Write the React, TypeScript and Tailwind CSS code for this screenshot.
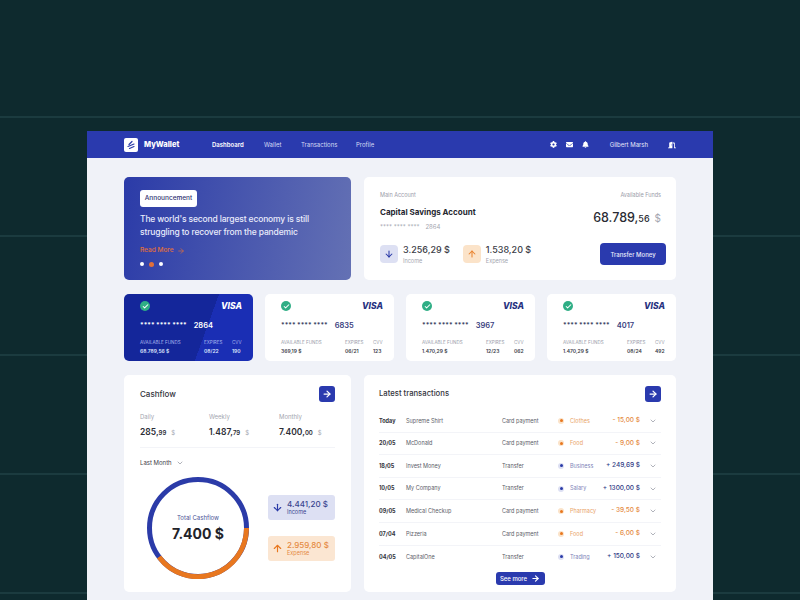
import React from 'react';
import { ArrowDown, ArrowRight, ArrowUp, Check, ChevronDown } from 'lucide-react';
import { FaBell, FaCog, FaDoorOpen, FaEnvelope } from 'react-icons/fa';

const cards = [
  { last: '2864', funds: '68.789,56 $', expires: '08/22', cvv: '190', active: true },
  { last: '6835', funds: '369,19 $', expires: '06/21', cvv: '123', active: false },
  { last: '3967', funds: '1.470,29 $', expires: '12/23', cvv: '062', active: false },
  { last: '4017', funds: '1.470,29 $', expires: '08/24', cvv: '492', active: false },
];

const transactions = [
  { date: 'Today', name: 'Supreme Shirt', type: 'Card payment', tag: 'Clothes', amount: '- 15,00 $', out: true },
  { date: '20/05', name: 'McDonald', type: 'Card payment', tag: 'Food', amount: '- 9,00 $', out: true },
  { date: '18/05', name: 'Invest Money', type: 'Transfer', tag: 'Business', amount: '+ 249,69 $', out: false },
  { date: '10/05', name: 'My Company', type: 'Transfer', tag: 'Salary', amount: '+ 1300,00 $', out: false },
  { date: '09/05', name: 'Medical Checkup', type: 'Card payment', tag: 'Pharmacy', amount: '- 39,50 $', out: true },
  { date: '07/04', name: 'Pizzeria', type: 'Card payment', tag: 'Food', amount: '- 6,00 $', out: true },
  { date: '04/05', name: 'CapitalOne', type: 'Transfer', tag: 'Trading', amount: '+ 150,00 $', out: false },
];

const Logo = () => (
  <div className="flex h-[14px] w-[14px] items-center justify-center rounded-[2px] bg-white">
    <svg width="10" height="10" viewBox="0 0 10 10" fill="none" stroke="#2b3ba8" strokeWidth="1.2" strokeLinecap="round">
      <path d="M3 4.5 6 1.5" />
      <path d="M2 6.5 8 4" />
      <path d="M3.5 8.5 8 6.5" />
    </svg>
  </div>
);

const Visa = ({ light }: { light: boolean }) => (
  <span className={`text-[8.5px] leading-none font-extrabold italic ${light ? 'text-white' : 'text-[#27327f]'}`}>VISA</span>
);

const PaymentCard = ({ card }: { card: (typeof cards)[number] }) => {
  const label = card.active ? 'text-[#a9b5ee]' : 'text-[#9a9daa]';
  const value = card.active ? 'text-[#dfe4fb]' : 'text-[#3b3d4a]';
  return (
    <div
      className={`flex h-[67px] flex-1 flex-col rounded-[5px] pt-[7px] pr-[11px] pl-[16px] ${
        card.active ? 'bg-[linear-gradient(110deg,#14269a_0%,#14269a_62%,#1a2eb4_62%,#1a2eb4_100%)]' : 'bg-white'
      }`}
    >
      <div className="flex items-center justify-between">
        <span className="flex h-[10px] w-[10px] items-center justify-center rounded-full bg-[#2fae85]">
          <Check size={7} strokeWidth={3.5} className="text-white" />
        </span>
        <Visa light={card.active} />
      </div>
      <div className="mt-[8px] flex items-center gap-[7px]">
        <span className={`text-[6.5px] leading-[10px] font-bold ${card.active ? 'text-white' : 'text-[#3b3f63]'}`}>
          **** **** ****
        </span>
        <span className={`mt-[2px] text-[7.5px] leading-[10px] font-semibold ${card.active ? 'text-white' : 'text-[#3a4180]'}`}>{card.last}</span>
      </div>
      <div className="mt-[7px] flex justify-between text-[4.5px] leading-[9px]">
        <div className="flex-1">
          <div className={label}>AVAILABLE FUNDS</div>
          <div className={`text-[5px] font-semibold ${value}`}>{card.funds}</div>
        </div>
        <div className="w-[28px]">
          <div className={label}>EXPIRES</div>
          <div className={`text-[5px] font-semibold ${value}`}>{card.expires}</div>
        </div>
        <div className="w-[10px]">
          <div className={label}>CVV</div>
          <div className={`text-[5px] font-semibold ${value}`}>{card.cvv}</div>
        </div>
      </div>
    </div>
  );
};

const SquareArrow = () => (
  <button className="flex h-[16px] w-[16px] items-center justify-center rounded-[3px] bg-[#2a3aae]">
    <ArrowRight size={10} strokeWidth={3} className="text-white" />
  </button>
);

const Stat = ({ label, whole, cents, width }: { label: string; whole: string; cents: string; width: string }) => (
  <div className={width}>
    <div className="text-[6px] leading-[8px] text-[#a4a6b0]">{label}</div>
    <div className="mt-[5px] flex items-baseline text-[8.5px] leading-[12px] font-semibold text-[#2c2d35]">
      {whole}
      <span className="text-[6px]">{cents}</span>
      <span className="ml-[5px] text-[6px] font-normal text-[#a4a6b0]">$</span>
    </div>
  </div>
);

const Summary = ({ out }: { out: boolean }) => (
  <div className="flex items-center gap-[5px]">
    <span
      className={`flex h-[18px] w-[18px] items-center justify-center rounded-[4px] ${out ? 'bg-[#fbe3c9]' : 'bg-[#dde0f3]'}`}
    >
      {out ? (
        <ArrowUp size={10} strokeWidth={2.5} className="text-[#e9822e]" />
      ) : (
        <ArrowDown size={10} strokeWidth={2.5} className="text-[#2b3ba8]" />
      )}
    </span>
    <div>
      <div className="text-[9px] leading-[12px] font-medium text-[#3b3c46]">{out ? '1.538,20 $' : '3.256,29 $'}</div>
      <div className="mt-[2px] text-[5.5px] leading-[7px] text-[#a4a6b0]">{out ? 'Expense' : 'Income'}</div>
    </div>
  </div>
);

const App: React.FC = () => {
  return (
    <div className="h-[600px] w-[800px] overflow-hidden bg-[#0e2a2e] bg-[linear-gradient(#1b3b3f_2px,transparent_2px)] bg-[length:100%_119px] bg-[position:0_116px] pt-[131px] pl-[87px] font-['Inter',sans-serif]">
      <div className="h-[469px] w-[626px] bg-[#f0f2f8]">
        <header className="flex h-[27px] items-center bg-[#2a3aae] pr-[37px] pl-[37px] text-[6px] text-[#d5daf5]">
          <Logo />
          <span className="ml-[6px] w-[68px] text-[7.5px] font-extrabold text-white">MyWallet</span>
          <span className="w-[52px] font-semibold text-white">Dashboard</span>
          <span className="w-[37px]">Wallet</span>
          <span className="w-[55px]">Transactions</span>
          <span>Profile</span>
          <div className="ml-auto flex items-center gap-[9px] text-white">
            <FaCog size={7} />
            <FaEnvelope size={7} />
            <FaBell size={7} />
          </div>
          <span className="ml-[21px] text-[#e5e8fa]">Gilbert Marsh</span>
          <FaDoorOpen size={8} className="ml-[20px] text-white" />
        </header>

        <main className="flex flex-col gap-[14px] pt-[19px] pr-[37px] pl-[37px]">
          <div className="flex gap-[13px]">
            <section className="flex h-[103px] w-[227px] flex-col items-start rounded-[5px] bg-[linear-gradient(100deg,#2b3ba8_0%,#6471b4_100%)] pt-[13px] pl-[16px]">
              <span className="flex h-[17px] w-[57px] items-center justify-center rounded-[3px] bg-white text-[6.5px] font-medium text-[#2f3170]">
                Announcement
              </span>
              <p className="mt-[6px] text-[8.5px] leading-[13px] font-medium tracking-[-0.15px] text-[#e9ebfb]">
                The world's second largest economy is still
                <br />
                struggling to recover from the pandemic
              </p>
              <div className="mt-[7px] flex items-center gap-[3px] text-[6.5px] font-medium text-[#e2703a]">
                Read More
                <ArrowRight size={8} strokeWidth={2} />
              </div>
              <div className="mt-[6px] flex items-center gap-[5px]">
                <span className="h-[4px] w-[4px] rounded-full bg-white" />
                <span className="h-[5px] w-[5px] rounded-full bg-[#e2703a]" />
                <span className="h-[4px] w-[4px] rounded-full bg-white" />
              </div>
            </section>

            <section className="flex h-[103px] flex-1 flex-col rounded-[5px] bg-white pt-[14px] pr-[10px] pl-[16px]">
              <div className="flex justify-between pr-[5px] text-[5.5px] leading-[8px] text-[#9a9ca8]">
                <span>Main Account</span>
                <span>Available Funds</span>
              </div>
              <div className="mt-[7px] flex justify-between">
                <div>
                  <div className="text-[8px] leading-[12px] font-bold text-[#26272f]">Capital Savings Account</div>
                  <div className="mt-[3px] flex items-center gap-[6px] text-[6px] leading-[12px] text-[#a4a6b0]">
                    <span>**** **** ****</span>
                    <span>2864</span>
                  </div>
                </div>
                <div className="mt-[3px] flex items-baseline pr-[5px] text-[12.5px] leading-[18px] font-medium text-[#2a2b33]">
                  68.789,<span className="text-[9px]">56</span>
                  <span className="ml-[5px] text-[10px] font-normal text-[#a4a6b0]">$</span>
                </div>
              </div>
              <div className="mt-[10px] flex items-center">
                <div className="flex gap-[13px]">
                  <Summary out={false} />
                  <Summary out={true} />
                </div>
                <button className="ml-auto flex h-[22px] w-[66px] items-center justify-center rounded-[4px] bg-[#2a3aae] text-[6px] font-medium text-[#e9ebfb]">
                  Transfer Money
                </button>
              </div>
            </section>
          </div>

          <div className="flex gap-[12px]">
            {cards.map((card) => (
              <PaymentCard key={card.last} card={card} />
            ))}
          </div>

          <div className="flex gap-[13px]">
            <section className="flex h-[217px] w-[227px] flex-col rounded-[5px] bg-white pt-[11px] pr-[16px] pl-[16px]">
              <div className="flex items-center justify-between">
                <h2 className="text-[8px] font-medium text-[#33343c]">Cashflow</h2>
                <SquareArrow />
              </div>
              <div className="mt-[11px] flex border-b border-[#f3f4f8] pb-[8px]">
                <Stat label="Daily" whole="285," cents="99" width="w-[69px]" />
                <Stat label="Weekly" whole="1.487," cents="79" width="w-[70px]" />
                <Stat label="Monthly" whole="7.400," cents="00" width="flex-1" />
              </div>
              <div className="mt-[11px] flex items-center gap-[4px] text-[6px] leading-[8px] text-[#3f4048]">
                Last Month
                <ChevronDown size={8} className="text-[#8a8c98]" />
              </div>
              <div className="mt-[10px] flex items-start">
                <div className="relative ml-[7px] h-[102px] w-[102px] shrink-0">
                  <svg width="102" height="102" viewBox="0 0 102 102" fill="none">
                    <circle cx="51" cy="51" r="48.5" stroke="#2b3ba8" strokeWidth="5" />
                    <path d="M99.5 51A48.5 48.5 0 0 1 12 80" stroke="#e8771f" strokeWidth="5" />
                  </svg>
                  <div className="absolute inset-0 flex flex-col items-center pt-[37px]">
                    <span className="text-[6px] leading-[8px] text-[#4a5296]">Total Cashflow</span>
                    <span className="mt-[2px] text-[14px] leading-[19px] font-bold text-[#22232a]">7.400 $</span>
                  </div>
                </div>
                <div className="ml-[19px] flex flex-col gap-[16px] pt-[18px]">
                  <div className="flex h-[25px] w-[67px] items-center gap-[4px] rounded-[3px] bg-[#dde0f3] pl-[4px]">
                    <ArrowDown size={11} strokeWidth={2.5} className="text-[#2b3ba8]" />
                    <div className="text-[#3a458f]">
                      <div className="text-[8px] leading-[10px] font-medium">4.441,20 $</div>
                      <div className="text-[5.5px] leading-[7px]">Income</div>
                    </div>
                  </div>
                  <div className="flex h-[25px] w-[67px] items-center gap-[4px] rounded-[3px] bg-[#fbe6d2] pl-[4px]">
                    <ArrowUp size={11} strokeWidth={2.5} className="text-[#e8771f]" />
                    <div className="text-[#e58a42]">
                      <div className="text-[8px] leading-[10px] font-medium">2.959,80 $</div>
                      <div className="text-[5.5px] leading-[7px]">Expense</div>
                    </div>
                  </div>
                </div>
              </div>
            </section>

            <section className="flex h-[217px] flex-1 flex-col rounded-[5px] bg-white pt-[11px] pr-[15px] pl-[15px]">
              <div className="flex items-center justify-between">
                <h2 className="text-[7.7px] font-medium text-[#33343c]">Latest transactions</h2>
                <SquareArrow />
              </div>
              <div className="mt-[8px] flex flex-col">
                {transactions.map((t) => (
                  <div key={t.date + t.name} className="flex h-[22.6px] shrink-0 items-center border-b border-[#f3f4f8] text-[5.5px] text-[#5b5d68] last:border-b-0">
                    <span className="w-[27px] font-bold text-[#33343c]">{t.date}</span>
                    <span className="w-[96px]">{t.name}</span>
                    <span className="w-[56px]">{t.type}</span>
                    <span className={`flex h-[6px] w-[6px] items-center justify-center rounded-full ${t.out ? 'bg-[#fbe3c9]' : 'bg-[#dde0f3]'}`}>
                      <span className={`h-[3px] w-[3px] rounded-full ${t.out ? 'bg-[#e8771f]' : 'bg-[#2b3ba8]'}`} />
                    </span>
                    <span className={`ml-[6px] w-[25px] ${t.out ? 'text-[#e9a468]' : 'text-[#7d83b8]'}`}>{t.tag}</span>
                    <span className={`w-[45px] text-right text-[6.5px] font-medium ${t.out ? 'text-[#e58a42]' : 'text-[#2f3a85]'}`}>{t.amount}</span>
                    <ChevronDown size={8} className="ml-[9px] text-[#8a8c98]" />
                  </div>
                ))}
              </div>
              <button className="mx-auto mt-[4px] flex h-[13px] w-[49px] shrink-0 items-center justify-center gap-[4px] rounded-[3px] bg-[#2a3aae] text-[6px] font-medium text-white">
                See more
                <ArrowRight size={9} strokeWidth={3} />
              </button>
            </section>
          </div>
        </main>
      </div>
    </div>
  );
};

export default App;
